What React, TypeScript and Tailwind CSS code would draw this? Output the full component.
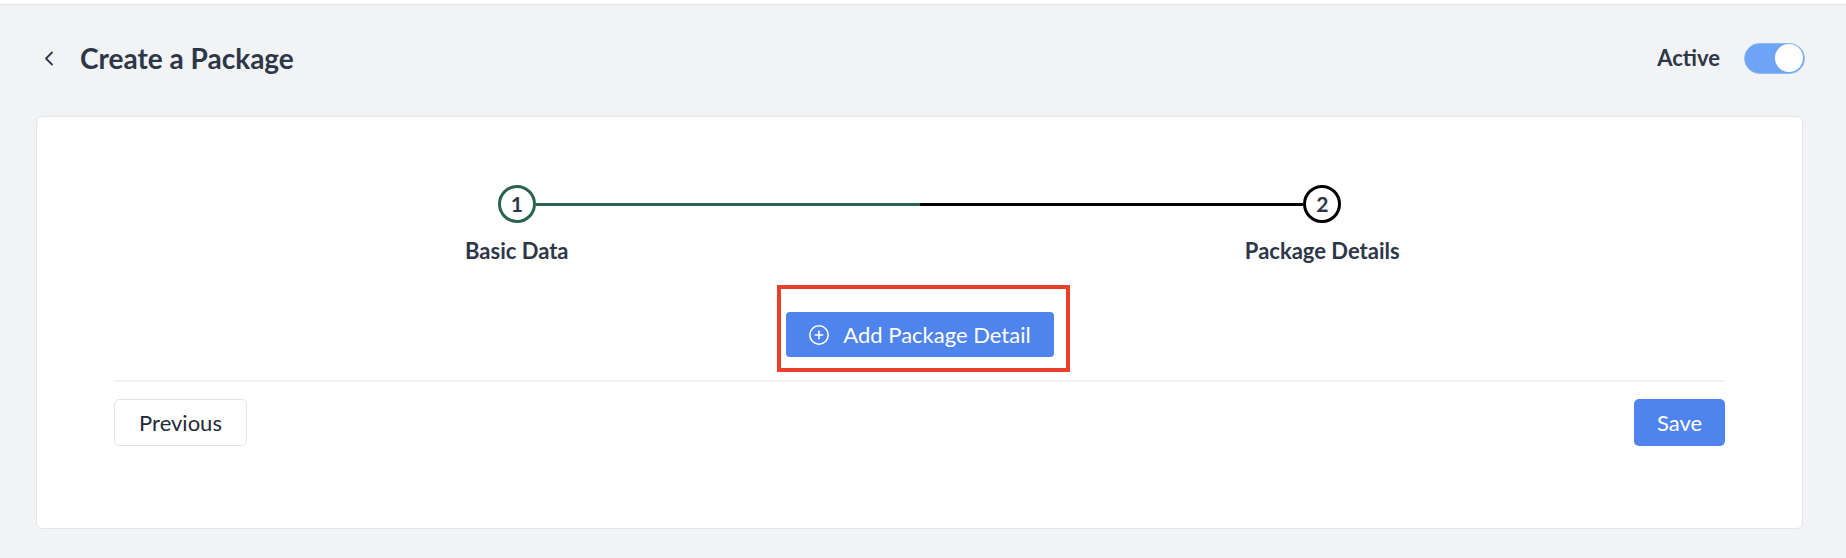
import { CirclePlus } from 'lucide-react'

function Toggle() {
  return (
    <div className="flex h-[31px] w-[61px] items-center justify-end rounded-full border border-[#8fb8f7] bg-[#6ea4f6] px-[1px]">
      <div className="h-[28px] w-[28px] rounded-full bg-white" />
    </div>
  )
}

function StepCircle({ n, done }: { n: number; done?: boolean }) {
  return (
    <div
      className={
        done
          ? 'flex h-[38px] w-[38px] shrink-0 items-center justify-center rounded-full border-[3px] border-[#2b6350] text-[21px] font-bold text-[#2d3748]'
          : 'flex h-[38px] w-[38px] shrink-0 items-center justify-center rounded-full border-[3px] border-black text-[21px] font-bold text-[#2d3748]'
      }
    >
      {n}
    </div>
  )
}

export default function App() {
  return (
    <div className="min-h-[558px] bg-[#f2f3f5] font-['Lato',sans-serif] text-[#2d3748]">
      <div className="h-[5px] border-b border-[#e3e5e8] bg-white" />

      {/* Header */}
      <div className="flex h-[106px] items-center justify-between pl-[43px] pr-[41px]">
        <div className="flex items-center gap-[25px]">
          <svg width="12" height="15" viewBox="0 0 12 15" fill="none">
            <polyline points="9,1.5 3,7.5 9,13.5" stroke="#2d3748" strokeWidth="1.8" strokeLinecap="round" strokeLinejoin="round" />
          </svg>
          <h1 className="text-[28px] font-bold leading-[34px] text-[#2d3748]">Create a Package</h1>
        </div>
        <div className="flex items-center gap-[24px]">
          <span className="text-[22px] font-bold leading-[28px]">Active</span>
          <Toggle />
        </div>
      </div>

      {/* Card */}
      <div className="ml-[36px] mr-[43px] mt-[5px] rounded-md border border-[#e3e5e8] bg-white px-[77px] pb-[82px] pt-[68px]">
        {/* Stepper */}
        <div className="grid grid-cols-2">
          <div className="flex flex-col items-center">
            <div className="flex w-full items-center">
              <div className="flex-1" />
              <StepCircle n={1} done />
              <div className="h-[3px] flex-1 bg-[#2b6350]" />
            </div>
            <div className="mt-[14px] text-[22px] font-bold leading-[27px]">Basic Data</div>
          </div>
          <div className="flex flex-col items-center">
            <div className="flex w-full items-center">
              <div className="h-[3px] flex-1 bg-black" />
              <StepCircle n={2} />
              <div className="flex-1" />
            </div>
            <div className="mt-[14px] text-[22px] font-bold leading-[27px]">Package Details</div>
          </div>
        </div>

        {/* Add detail */}
        <div className="mt-[21px] flex justify-center">
          <div className="ml-[7px] border-4 border-[#e8402a] pb-[11px] pl-[5px] pr-[12px] pt-[23px]">
            <button className="flex h-[45px] w-[268px] items-center justify-center gap-[13px] rounded-[4px] bg-[#4f84ee] text-[22px] leading-[28px] text-white">
              <CirclePlus className="h-[22px] w-[22px]" strokeWidth={1.7} />
              Add Package Detail
            </button>
          </div>
        </div>

        <div className="mt-[8px] h-[2px] bg-[#f1f1f1]" />

        <div className="mt-[17px] flex items-center justify-between">
          <button className="h-[47px] w-[133px] rounded-[5px] border border-[#e3e5e8] bg-white text-[22px] leading-[28px] text-[#1f2937]">
            Previous
          </button>
          <button className="h-[47px] w-[91px] rounded-[5px] bg-[#4f84ee] text-[22px] leading-[28px] text-white">
            Save
          </button>
        </div>
      </div>
    </div>
  )
}
